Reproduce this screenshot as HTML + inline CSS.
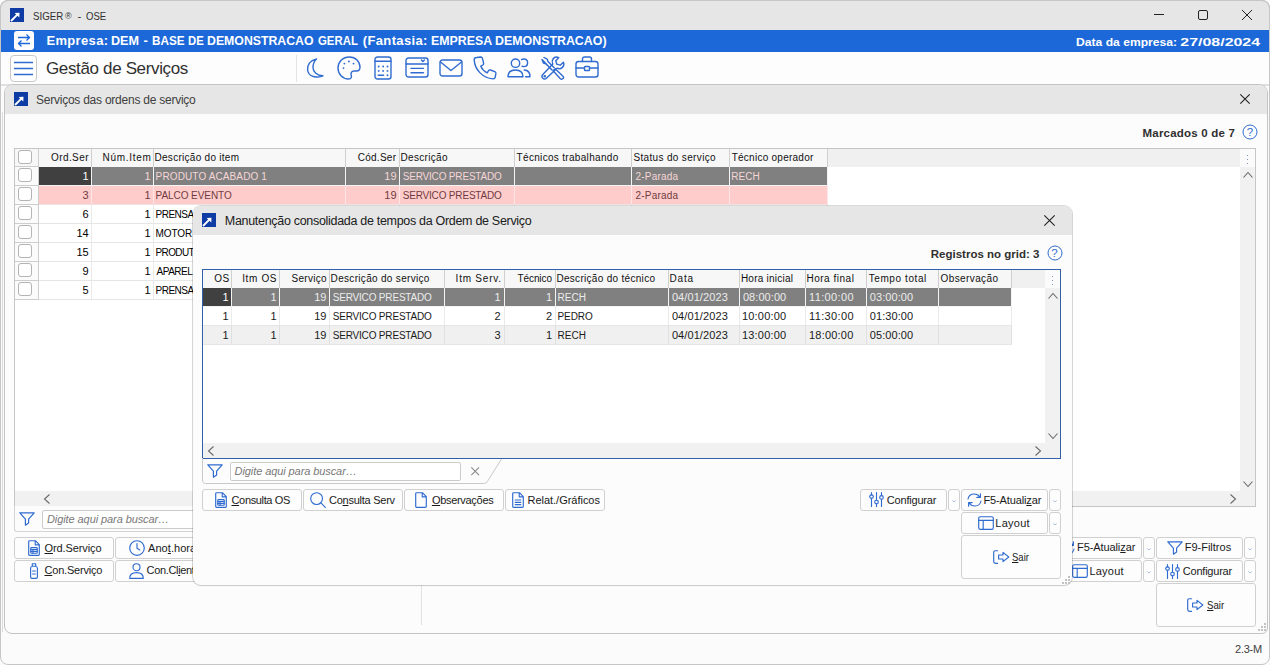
<!DOCTYPE html>
<html lang="pt-BR">
<head>
<meta charset="utf-8">
<title>SIGER - OSE</title>
<style>
html,body{margin:0;padding:0;}
body{width:1270px;height:665px;overflow:hidden;position:relative;background:#e9e9e9;font-family:"Liberation Sans",sans-serif;font-size:11px;color:#000;}
body div{position:absolute;box-sizing:border-box;}
.t{position:absolute;white-space:pre;}
svg{position:absolute;overflow:visible;}
u{text-decoration:underline;text-underline-offset:1px;}
.btn{background:#fdfdfd;border:1px solid #d0d0d0;border-radius:3px;}
.cb{background:#fff;border:1px solid #b4b4b4;border-radius:3px;width:14px;height:14px;}
</style>
</head>
<body>
<div style="left:0px;top:0px;width:1270px;height:665px;background:#fbfbfb;"></div>
<div style="left:0px;top:0px;width:1270px;height:31px;background:#e6e6e6;border:1px solid #c8c8c8;border-radius:8px 8px 0 0;border-bottom:none;"></div>
<svg style="left:10px;top:8px" width="14" height="14" viewBox="0 0 14 14"><rect width="14" height="14" fill="#0e3ba4"/><path d="M1 13 L7.6 6.4" fill="none" stroke="#fff" stroke-width="1.9"/><path d="M4.6 4.9 L9.5 4.7 L9.3 9.6 Z" fill="#fff"/></svg>
<span class="t" style="top:8.5px;font-size:11.5px;line-height:15.5px;color:#303030;left:33.00px;display:inline-block;transform:scaleX(0.8457);transform-origin:0 50%;">SIGER</span>
<span class="t" style="top:9.5px;font-size:9px;line-height:13px;color:#303030;left:65.00px;">®</span>
<span class="t" style="top:8.5px;font-size:11.5px;line-height:15.5px;color:#303030;left:77.40px;">-</span>
<span class="t" style="top:8.5px;font-size:11.5px;line-height:15.5px;color:#303030;left:85.60px;display:inline-block;transform:scaleX(0.8333);transform-origin:0 50%;">OSE</span>
<svg style="left:1153px;top:9px" width="110" height="14" viewBox="0 0 110 14"><path d="M1 5.5 H11" stroke="#222" stroke-width="1" fill="none"/><rect x="45.5" y="1.5" width="9" height="9" rx="1.5" fill="none" stroke="#222" stroke-width="1"/><path d="M89 1 L99 11 M99 1 L89 11" stroke="#222" stroke-width="1" fill="none"/></svg>
<div style="left:1px;top:30px;width:1268px;height:22px;background:#1c68d8;"></div>
<div style="left:14px;top:31px;width:20px;height:19px;background:#fff;border-radius:3px;"></div>
<svg style="left:14px;top:31px" width="20" height="19" viewBox="0 0 20 19"><path d="M4 6.5 H15.5 M12.5 3.5 L15.5 6.5 L12.5 9.5 M16 12.5 H4.5 M7.5 9.5 L4.5 12.5 L7.5 15.5" fill="none" stroke="#1c68d8" stroke-width="1.3"/></svg>
<span class="t" style="top:32.0px;font-size:13px;line-height:17px;color:#fff;font-weight:700;letter-spacing:0.343px;left:46.40px;">Empresa:</span>
<span class="t" style="top:32.0px;font-size:13px;line-height:17px;color:#fff;font-weight:700;left:110.63px;display:inline-block;transform:scaleX(0.9704);transform-origin:0 50%;">DEM</span>
<span class="t" style="top:32.0px;font-size:13px;line-height:17px;color:#fff;font-weight:700;left:143.60px;">-</span>
<span class="t" style="top:32.0px;font-size:13px;line-height:17px;color:#fff;font-weight:700;left:151.50px;display:inline-block;transform:scaleX(0.9029);transform-origin:0 50%;">BASE</span>
<span class="t" style="top:32.0px;font-size:13px;line-height:17px;color:#fff;font-weight:700;left:188.13px;display:inline-block;transform:scaleX(0.8706);transform-origin:0 50%;">DE</span>
<span class="t" style="top:32.0px;font-size:13px;line-height:17px;color:#fff;font-weight:700;left:207.25px;display:inline-block;transform:scaleX(0.9459);transform-origin:0 50%;">DEMONSTRACAO</span>
<span class="t" style="top:32.0px;font-size:13px;line-height:17px;color:#fff;font-weight:700;left:317.70px;display:inline-block;transform:scaleX(0.8756);transform-origin:0 50%;">GERAL</span>
<span class="t" style="top:32.0px;font-size:13px;line-height:17px;color:#fff;font-weight:700;letter-spacing:0.356px;left:362.80px;">(Fantasia:</span>
<span class="t" style="top:32.0px;font-size:13px;line-height:17px;color:#fff;font-weight:700;left:431.05px;display:inline-block;transform:scaleX(0.9524);transform-origin:0 50%;">EMPRESA</span>
<span class="t" style="top:32.0px;font-size:13px;line-height:17px;color:#fff;font-weight:700;left:495.35px;display:inline-block;transform:scaleX(0.9534);transform-origin:0 50%;">DEMONSTRACAO)</span>
<span class="t" style="top:34.5px;font-size:11px;line-height:15px;color:#fff;font-weight:700;left:1076.20px;display:inline-block;transform:scaleX(1.1022);transform-origin:0 50%;">Data da empresa:</span>
<span class="t" style="top:34.5px;font-size:11px;line-height:15px;color:#fff;font-weight:700;right:9.61px;display:inline-block;transform:scaleX(1.4473);transform-origin:100% 50%;">27/08/2024</span>
<div style="left:1px;top:52px;width:1268px;height:32px;background:#fdfdfd;"></div>
<div style="left:1px;top:84px;width:1268px;height:2px;background:#e0e0e0;"></div>
<div style="left:10px;top:55px;width:27px;height:27px;background:#fff;border:1px solid #c8c8c8;border-radius:4px;"></div>
<svg style="left:10px;top:55px" width="27" height="27" viewBox="0 0 27 27"><path d="M4 7.5 H23 M4 13.5 H23 M4 19.5 H23" stroke="#2f6bd0" stroke-width="1.4" fill="none"/></svg>
<span class="t" style="top:57.5px;font-size:17px;line-height:21px;color:#303030;letter-spacing:-0.353px;left:46.00px;">Gestão de Serviços</span>
<div style="left:296px;top:55px;width:1px;height:27px;background:#e4e4e4;"></div>
<svg style="left:306px;top:57.5px" width="18" height="21" viewBox="0 0 18 21" fill="none" stroke="#2f6bd0" stroke-width="1.4" stroke-linecap="round" stroke-linejoin="round"><path d="M10.5 1 C4 2.5 1 7 1.6 12 C2.3 17.5 8 21 17 17.8 C11 17.6 7 13.8 7 9.5 C7 6 8.3 3 10.5 1 Z"/></svg>
<svg style="left:337px;top:56px" width="24" height="24" viewBox="0 0 24 24" fill="none" stroke="#2f6bd0" stroke-width="1.4" stroke-linecap="round" stroke-linejoin="round"><path d="M12.5 1 C5.5 1 1 6 1 12 C1 18 5.5 23 11.5 23 C14.5 23 14.8 21 14.2 19.3 C13.5 17.2 14.5 15 17 15 H19.5 C22 15 23 13.2 23 11 C23 5.5 18.5 1 12.5 1 Z"/><g stroke="none" fill="#2f6bd0"><circle cx="6.5" cy="12.1" r="0.95"/><circle cx="7.4" cy="7.6" r="0.95"/><circle cx="11.9" cy="5.4" r="0.95"/><circle cx="16.5" cy="7.6" r="0.95"/></g></svg>
<svg style="left:374px;top:56px" width="18" height="24" viewBox="0 0 18 24" fill="none" stroke="#2f6bd0" stroke-width="1.4" stroke-linecap="round" stroke-linejoin="round"><rect x="1" y="1" width="16" height="22" rx="2.5"/><path d="M1 5.3 H17"/><g fill="#2f6bd0" stroke="none"><circle cx="4.7" cy="10.5" r="0.95"/><circle cx="9.1" cy="10.5" r="0.95"/><circle cx="13.5" cy="10.5" r="0.95"/><circle cx="4.7" cy="14.9" r="0.95"/><circle cx="9.1" cy="14.9" r="0.95"/><circle cx="13.5" cy="14.9" r="0.95"/><circle cx="13.5" cy="19.3" r="0.95"/></g><path d="M4.2 19.3 H9.6"/></svg>
<svg style="left:405px;top:57px" width="24" height="21" viewBox="0 0 24 21" fill="none" stroke="#2f6bd0" stroke-width="1.4" stroke-linecap="round" stroke-linejoin="round"><rect x="1" y="1" width="22" height="19" rx="2.5"/><path d="M1 7 H23 M6 11.4 H18.4 M6 15.8 H18.4 M16.4 3 L17.9 4.4 L19.4 3"/></svg>
<svg style="left:439px;top:59px" width="24" height="18" viewBox="0 0 24 18" fill="none" stroke="#2f6bd0" stroke-width="1.4" stroke-linecap="round" stroke-linejoin="round"><rect x="1" y="1" width="22" height="16" rx="2.5"/><path d="M1.5 3 L12 11.5 L22.5 3"/></svg>
<svg style="left:473px;top:56px" width="24" height="24" viewBox="0 0 24 24" fill="none" stroke="#2f6bd0" stroke-width="1.4" stroke-linecap="round" stroke-linejoin="round"><path d="M3.5 1.5 L7.8 1 C8.6 1 9.2 1.5 9.4 2.2 L10.6 7.2 C10.8 8 10.4 8.6 9.8 9 L7.8 10.2 C9 13 11.2 15.4 14.2 16.8 L15.6 14.6 C16 14 16.8 13.8 17.4 14 L21.8 15.6 C22.6 15.9 23 16.6 22.9 17.4 L22.2 21.2 C22 22.2 21.2 23 20 22.9 C9.5 22 1.6 13.5 1.2 3.6 C1.2 2.4 2.2 1.6 3.5 1.5 Z"/></svg>
<svg style="left:507px;top:58px" width="24" height="20" viewBox="0 0 24 20" fill="none" stroke="#2f6bd0" stroke-width="1.4" stroke-linecap="round" stroke-linejoin="round"><circle cx="8.5" cy="5.2" r="4.2"/><path d="M1 18.8 C1 14.5 4 12 8.5 12 C13 12 16 14.5 16 18.8 Z"/><path d="M14.5 1.6 C15.2 1.2 16 1 16.8 1 C19 1 20.6 2.6 20.6 4.8 C20.6 7 19 8.6 16.8 8.6 C16.2 8.6 15.6 8.5 15.1 8.2"/><path d="M17.2 12 C20.8 12.2 23 14.6 23 18.8 H18.6"/></svg>
<svg style="left:541px;top:56px" width="24" height="24" viewBox="0 0 24 24" fill="none" stroke="#2f6bd0" stroke-width="1.4" stroke-linecap="round" stroke-linejoin="round"><path d="M3 1.5 L6.2 3.2 L7 5.6 L13.2 11.8 M11 14 L4.8 7.8 L2.4 7 L1 3.6 Z" /><path d="M14.2 12.8 L22.2 20.4 C22.8 21 22.8 21.8 22.2 22.4 L21.4 23 C20.8 23.4 20 23.4 19.4 22.8 L12 14.8 Z"/><path d="M17.8 1.6 C15.6 0.6 13.2 1.2 12 3 C11 4.5 11 6.4 11.8 8 L1.8 18.6 C0.8 19.6 0.8 21.2 1.8 22.2 C2.8 23.2 4.4 23.2 5.4 22.2 L16 12.2 C17.8 13 19.8 12.8 21.2 11.6 C22.8 10.2 23.2 8 22.4 6.2 L19.2 9.2 L15.8 8.2 L14.8 4.8 Z"/><circle cx="3.8" cy="20.2" r="0.6"/></svg>
<svg style="left:575px;top:56px" width="24" height="22" viewBox="0 0 24 22" fill="none" stroke="#2f6bd0" stroke-width="1.4" stroke-linecap="round" stroke-linejoin="round"><rect x="1" y="5.5" width="22" height="15.5" rx="2.5"/><path d="M7.5 5.5 V3 C7.5 1.8 8.3 1 9.5 1 H14.5 C15.7 1 16.5 1.8 16.5 3 V5.5 M1 12 H9.5 M14.5 12 H23"/><rect x="9.5" y="10.5" width="5" height="4" rx="0.8"/></svg>
<div style="left:1px;top:86px;width:1268px;height:548px;background:#fbfbfb;"></div>
<div style="left:2px;top:112px;width:1px;height:520px;background:#dcdcdc;"></div>
<div style="left:4px;top:84px;width:1264px;height:550px;background:#fcfcfc;border:1px solid #c4c4c4;border-radius:9px 9px 6px 8px;"></div>
<div style="left:5px;top:85px;width:1262px;height:29px;background:#e6e6e6;border-radius:8px 8px 0 0;"></div>
<svg style="left:14px;top:92px" width="14" height="14" viewBox="0 0 14 14"><rect width="14" height="14" fill="#0e3ba4"/><path d="M1 13 L7.6 6.4" fill="none" stroke="#fff" stroke-width="1.9"/><path d="M4.6 4.9 L9.5 4.7 L9.3 9.6 Z" fill="#fff"/></svg>
<span class="t" style="top:92.0px;font-size:12px;line-height:16px;color:#404040;letter-spacing:-0.241px;left:36.00px;">Serviços das ordens de serviço</span>
<svg style="left:1240px;top:94px" width="10" height="10" viewBox="0 0 10 10"><path d="M0.3 0.3 L9.7 9.7 M9.7 0.3 L0.3 9.7" stroke="#222" stroke-width="1.1" fill="none"/></svg>
<span class="t" style="top:125.5px;font-size:11.5px;line-height:15.5px;color:#303030;font-weight:700;letter-spacing:0.214px;right:34.80px;">Marcados 0 de 7</span>
<svg style="left:1242px;top:124px" width="16" height="16" viewBox="0 0 16 16"><circle cx="8" cy="8" r="7" fill="#fff" stroke="#2f6bd0" stroke-width="1"/></svg>
<span class="t" style="top:124.5px;font-size:11.5px;line-height:15.5px;color:#2f6bd0;left:1246.80px;">?</span>
<span class="t" style="top:642.0px;font-size:11px;line-height:15px;color:#404040;letter-spacing:-0.250px;right:8.12px;">2.3-M</span>
<div style="left:0;top:0;width:1270px;height:665px;border:1px solid #c6c6c6;border-radius:8px 8px 8px 8px;pointer-events:none"></div>
<div style="left:14px;top:148px;width:1242px;height:359px;background:#fff;border:1px solid #c6c6c6;"></div>
<div style="left:15px;top:149px;width:1225px;height:18px;background:#f0f0f0;"></div>
<div style="left:1240px;top:167px;width:15px;height:339px;background:#f1f1f1;"></div>
<div style="left:15px;top:491px;width:1225px;height:15px;background:#f1f1f1;"></div>
<div style="left:1240px;top:149px;width:15px;height:18px;background:#fbfbfb;"></div>
<div style="left:1247px;top:155px;width:1.4px;height:1.4px;background:#7e96c4;"></div>
<div style="left:1247px;top:159px;width:1.4px;height:1.4px;background:#7e96c4;"></div>
<div style="left:1247px;top:163px;width:1.4px;height:1.4px;background:#7e96c4;"></div>
<svg style="left:1247.5px;top:175px" width="1" height="1"><path d="M-4.5 2.5 L0 -2.5 L4.5 2.5" fill="none" stroke="#6a6a6a" stroke-width="1.1"/></svg>
<svg style="left:1247.5px;top:483.5px" width="1" height="1"><path d="M-4.5 -2.5 L0 2.5 L4.5 -2.5" fill="none" stroke="#6a6a6a" stroke-width="1.1"/></svg>
<svg style="left:46.5px;top:498.5px" width="1" height="1"><path d="M2.5 -4.5 L-2.5 0 L2.5 4.5" fill="none" stroke="#6a6a6a" stroke-width="1.1"/></svg>
<svg style="left:1232.5px;top:498.5px" width="1" height="1"><path d="M-2.5 -4.5 L2.5 0 L-2.5 4.5" fill="none" stroke="#6a6a6a" stroke-width="1.1"/></svg>
<div style="left:15px;top:149px;width:23px;height:18px;background:#f7f7f7;"></div>
<div style="left:38px;top:149px;width:1px;height:18px;background:#cfcfcf;"></div>
<div style="left:39px;top:149px;width:52px;height:18px;background:#f7f7f7;"></div>
<div style="left:91px;top:149px;width:1px;height:18px;background:#cfcfcf;"></div>
<span class="t" style="top:150.5px;font-size:10px;line-height:14px;color:#111;letter-spacing:0.417px;right:1181.07px;">Ord.Ser</span>
<div style="left:92px;top:149px;width:61px;height:18px;background:#f7f7f7;"></div>
<div style="left:153px;top:149px;width:1px;height:18px;background:#cfcfcf;"></div>
<span class="t" style="top:150.5px;font-size:10px;line-height:14px;color:#111;letter-spacing:0.714px;right:1118.44px;">Núm.Item</span>
<div style="left:154px;top:149px;width:191px;height:18px;background:#f7f7f7;"></div>
<div style="left:345px;top:149px;width:1px;height:18px;background:#cfcfcf;"></div>
<span class="t" style="top:150.5px;font-size:10px;line-height:14px;color:#111;letter-spacing:0.281px;left:154.50px;">Descrição do item</span>
<div style="left:346px;top:149px;width:53px;height:18px;background:#f7f7f7;"></div>
<div style="left:399px;top:149px;width:1px;height:18px;background:#cfcfcf;"></div>
<span class="t" style="top:150.5px;font-size:10px;line-height:14px;color:#111;letter-spacing:0.267px;right:873.75px;">Cód.Ser</span>
<div style="left:400px;top:149px;width:114px;height:18px;background:#f7f7f7;"></div>
<div style="left:514px;top:149px;width:1px;height:18px;background:#cfcfcf;"></div>
<span class="t" style="top:150.5px;font-size:10px;line-height:14px;color:#111;letter-spacing:0.300px;left:400.60px;">Descrição</span>
<div style="left:515px;top:149px;width:116px;height:18px;background:#f7f7f7;"></div>
<div style="left:631px;top:149px;width:1px;height:18px;background:#cfcfcf;"></div>
<span class="t" style="top:150.5px;font-size:10px;line-height:14px;color:#111;letter-spacing:0.316px;left:516.60px;">Técnicos trabalhando</span>
<div style="left:632px;top:149px;width:97px;height:18px;background:#f7f7f7;"></div>
<div style="left:729px;top:149px;width:1px;height:18px;background:#cfcfcf;"></div>
<span class="t" style="top:150.5px;font-size:10px;line-height:14px;color:#111;letter-spacing:0.344px;left:633.40px;">Status do serviço</span>
<div style="left:730px;top:149px;width:97px;height:18px;background:#f7f7f7;"></div>
<div style="left:827px;top:149px;width:1px;height:18px;background:#cfcfcf;"></div>
<span class="t" style="top:150.5px;font-size:10px;line-height:14px;color:#111;letter-spacing:0.253px;left:731.70px;">Técnico operador</span>
<div style="left:15px;top:167px;width:23px;height:18px;background:#fbfbfb;"></div>
<div style="left:15px;top:185px;width:23px;height:1px;background:#cdcdcd;"></div>
<div style="left:38px;top:167px;width:1px;height:19px;background:#cdcdcd;"></div>
<div style="left:39px;top:167px;width:52px;height:18px;background:#404040;"></div>
<div style="left:91px;top:167px;width:1px;height:19px;background:#f4f4f4;"></div>
<div style="left:92px;top:167px;width:61px;height:18px;background:#808080;"></div>
<div style="left:153px;top:167px;width:1px;height:19px;background:#f4f4f4;"></div>
<div style="left:154px;top:167px;width:191px;height:18px;background:#808080;"></div>
<div style="left:345px;top:167px;width:1px;height:19px;background:#f4f4f4;"></div>
<div style="left:346px;top:167px;width:53px;height:18px;background:#808080;"></div>
<div style="left:399px;top:167px;width:1px;height:19px;background:#f4f4f4;"></div>
<div style="left:400px;top:167px;width:114px;height:18px;background:#808080;"></div>
<div style="left:514px;top:167px;width:1px;height:19px;background:#f4f4f4;"></div>
<div style="left:515px;top:167px;width:116px;height:18px;background:#808080;"></div>
<div style="left:631px;top:167px;width:1px;height:19px;background:#f4f4f4;"></div>
<div style="left:632px;top:167px;width:97px;height:18px;background:#808080;"></div>
<div style="left:729px;top:167px;width:1px;height:19px;background:#f4f4f4;"></div>
<div style="left:730px;top:167px;width:97px;height:18px;background:#808080;"></div>
<div style="left:827px;top:167px;width:1px;height:19px;background:#f4f4f4;"></div>
<div style="left:39px;top:185px;width:789px;height:1px;background:#f4f4f4;"></div>
<span class="t" style="top:168.5px;font-size:11px;line-height:15px;color:#fff;right:1181.38px;">1</span>
<span class="t" style="top:168.5px;font-size:11px;line-height:15px;color:#f6d6d6;right:1119.38px;">1</span>
<span class="t" style="top:169.5px;font-size:10px;line-height:14px;color:#f6d6d6;letter-spacing:0.125px;left:155.60px;">PRODUTO ACABADO 1</span>
<span class="t" style="top:168.5px;font-size:11px;line-height:15px;color:#f6d6d6;right:873.45px;">19</span>
<span class="t" style="top:169.5px;font-size:10px;line-height:14px;color:#f6d6d6;letter-spacing:-0.180px;left:402.70px;">SERVICO PRESTADO</span>
<span class="t" style="top:169.5px;font-size:10px;line-height:14px;color:#f6d6d6;letter-spacing:0.229px;left:635.40px;">2-Parada</span>
<span class="t" style="top:169.5px;font-size:10px;line-height:14px;color:#f6d6d6;letter-spacing:0.067px;left:731.30px;">RECH</span>
<div style="left:15px;top:186px;width:23px;height:18px;background:#fbfbfb;"></div>
<div style="left:15px;top:204px;width:23px;height:1px;background:#cdcdcd;"></div>
<div style="left:38px;top:186px;width:1px;height:19px;background:#cdcdcd;"></div>
<div style="left:39px;top:186px;width:52px;height:18px;background:#ffcccc;"></div>
<div style="left:91px;top:186px;width:1px;height:19px;background:#ffe6e6;"></div>
<div style="left:92px;top:186px;width:61px;height:18px;background:#ffcccc;"></div>
<div style="left:153px;top:186px;width:1px;height:19px;background:#ffe6e6;"></div>
<div style="left:154px;top:186px;width:191px;height:18px;background:#ffcccc;"></div>
<div style="left:345px;top:186px;width:1px;height:19px;background:#ffe6e6;"></div>
<div style="left:346px;top:186px;width:53px;height:18px;background:#ffcccc;"></div>
<div style="left:399px;top:186px;width:1px;height:19px;background:#ffe6e6;"></div>
<div style="left:400px;top:186px;width:114px;height:18px;background:#ffcccc;"></div>
<div style="left:514px;top:186px;width:1px;height:19px;background:#ffe6e6;"></div>
<div style="left:515px;top:186px;width:116px;height:18px;background:#ffcccc;"></div>
<div style="left:631px;top:186px;width:1px;height:19px;background:#ffe6e6;"></div>
<div style="left:632px;top:186px;width:97px;height:18px;background:#ffcccc;"></div>
<div style="left:729px;top:186px;width:1px;height:19px;background:#ffe6e6;"></div>
<div style="left:730px;top:186px;width:97px;height:18px;background:#ffcccc;"></div>
<div style="left:827px;top:186px;width:1px;height:19px;background:#ffe6e6;"></div>
<div style="left:39px;top:204px;width:789px;height:1px;background:#f0e0e0;"></div>
<span class="t" style="top:187.5px;font-size:11px;line-height:15px;color:#6e3c40;right:1181.38px;">3</span>
<span class="t" style="top:187.5px;font-size:11px;line-height:15px;color:#6e3c40;right:1119.38px;">1</span>
<span class="t" style="top:188.5px;font-size:10px;line-height:14px;color:#6e3c40;letter-spacing:-0.073px;left:155.60px;">PALCO EVENTO</span>
<span class="t" style="top:187.5px;font-size:11px;line-height:15px;color:#6e3c40;right:873.45px;">19</span>
<span class="t" style="top:188.5px;font-size:10px;line-height:14px;color:#6e3c40;letter-spacing:-0.180px;left:402.70px;">SERVICO PRESTADO</span>
<span class="t" style="top:188.5px;font-size:10px;line-height:14px;color:#6e3c40;letter-spacing:0.229px;left:635.40px;">2-Parada</span>
<div style="left:15px;top:205px;width:23px;height:18px;background:#fbfbfb;"></div>
<div style="left:15px;top:223px;width:23px;height:1px;background:#cdcdcd;"></div>
<div style="left:38px;top:205px;width:1px;height:19px;background:#cdcdcd;"></div>
<div style="left:91px;top:205px;width:1px;height:19px;background:#eaeaea;"></div>
<div style="left:153px;top:205px;width:1px;height:19px;background:#eaeaea;"></div>
<div style="left:345px;top:205px;width:1px;height:19px;background:#eaeaea;"></div>
<div style="left:399px;top:205px;width:1px;height:19px;background:#eaeaea;"></div>
<div style="left:514px;top:205px;width:1px;height:19px;background:#eaeaea;"></div>
<div style="left:631px;top:205px;width:1px;height:19px;background:#eaeaea;"></div>
<div style="left:729px;top:205px;width:1px;height:19px;background:#eaeaea;"></div>
<div style="left:827px;top:205px;width:1px;height:19px;background:#eaeaea;"></div>
<div style="left:39px;top:223px;width:789px;height:1px;background:#e6e6e6;"></div>
<span class="t" style="top:206.5px;font-size:11px;line-height:15px;color:#000;right:1181.38px;">6</span>
<span class="t" style="top:206.5px;font-size:11px;line-height:15px;color:#000;right:1119.38px;">1</span>
<span class="t" style="top:207.5px;font-size:10px;line-height:14px;color:#000;letter-spacing:-0.520px;left:155.60px;">PRENSA</span>
<div style="left:15px;top:224px;width:23px;height:18px;background:#fbfbfb;"></div>
<div style="left:15px;top:242px;width:23px;height:1px;background:#cdcdcd;"></div>
<div style="left:38px;top:224px;width:1px;height:19px;background:#cdcdcd;"></div>
<div style="left:91px;top:224px;width:1px;height:19px;background:#eaeaea;"></div>
<div style="left:153px;top:224px;width:1px;height:19px;background:#eaeaea;"></div>
<div style="left:345px;top:224px;width:1px;height:19px;background:#eaeaea;"></div>
<div style="left:399px;top:224px;width:1px;height:19px;background:#eaeaea;"></div>
<div style="left:514px;top:224px;width:1px;height:19px;background:#eaeaea;"></div>
<div style="left:631px;top:224px;width:1px;height:19px;background:#eaeaea;"></div>
<div style="left:729px;top:224px;width:1px;height:19px;background:#eaeaea;"></div>
<div style="left:827px;top:224px;width:1px;height:19px;background:#eaeaea;"></div>
<div style="left:39px;top:242px;width:789px;height:1px;background:#e6e6e6;"></div>
<span class="t" style="top:225.5px;font-size:11px;line-height:15px;color:#000;right:1181.25px;">14</span>
<span class="t" style="top:225.5px;font-size:11px;line-height:15px;color:#000;right:1119.38px;">1</span>
<span class="t" style="top:226.5px;font-size:10px;line-height:14px;color:#000;letter-spacing:-0.125px;left:155.60px;">MOTOR</span>
<div style="left:15px;top:243px;width:23px;height:18px;background:#fbfbfb;"></div>
<div style="left:15px;top:261px;width:23px;height:1px;background:#cdcdcd;"></div>
<div style="left:38px;top:243px;width:1px;height:19px;background:#cdcdcd;"></div>
<div style="left:91px;top:243px;width:1px;height:19px;background:#eaeaea;"></div>
<div style="left:153px;top:243px;width:1px;height:19px;background:#eaeaea;"></div>
<div style="left:345px;top:243px;width:1px;height:19px;background:#eaeaea;"></div>
<div style="left:399px;top:243px;width:1px;height:19px;background:#eaeaea;"></div>
<div style="left:514px;top:243px;width:1px;height:19px;background:#eaeaea;"></div>
<div style="left:631px;top:243px;width:1px;height:19px;background:#eaeaea;"></div>
<div style="left:729px;top:243px;width:1px;height:19px;background:#eaeaea;"></div>
<div style="left:827px;top:243px;width:1px;height:19px;background:#eaeaea;"></div>
<div style="left:39px;top:261px;width:789px;height:1px;background:#e6e6e6;"></div>
<span class="t" style="top:244.5px;font-size:11px;line-height:15px;color:#000;right:1181.25px;">15</span>
<span class="t" style="top:244.5px;font-size:11px;line-height:15px;color:#000;right:1119.38px;">1</span>
<span class="t" style="top:245.5px;font-size:10px;line-height:14px;color:#000;letter-spacing:-0.640px;left:155.60px;">PRODUT</span>
<div style="left:15px;top:262px;width:23px;height:18px;background:#fbfbfb;"></div>
<div style="left:15px;top:280px;width:23px;height:1px;background:#cdcdcd;"></div>
<div style="left:38px;top:262px;width:1px;height:19px;background:#cdcdcd;"></div>
<div style="left:91px;top:262px;width:1px;height:19px;background:#eaeaea;"></div>
<div style="left:153px;top:262px;width:1px;height:19px;background:#eaeaea;"></div>
<div style="left:345px;top:262px;width:1px;height:19px;background:#eaeaea;"></div>
<div style="left:399px;top:262px;width:1px;height:19px;background:#eaeaea;"></div>
<div style="left:514px;top:262px;width:1px;height:19px;background:#eaeaea;"></div>
<div style="left:631px;top:262px;width:1px;height:19px;background:#eaeaea;"></div>
<div style="left:729px;top:262px;width:1px;height:19px;background:#eaeaea;"></div>
<div style="left:827px;top:262px;width:1px;height:19px;background:#eaeaea;"></div>
<div style="left:39px;top:280px;width:789px;height:1px;background:#e6e6e6;"></div>
<span class="t" style="top:263.5px;font-size:11px;line-height:15px;color:#000;right:1181.38px;">9</span>
<span class="t" style="top:263.5px;font-size:11px;line-height:15px;color:#000;right:1119.38px;">1</span>
<span class="t" style="top:264.5px;font-size:10px;line-height:14px;color:#000;letter-spacing:-0.500px;left:156.60px;">APAREL</span>
<div style="left:15px;top:281px;width:23px;height:18px;background:#fbfbfb;"></div>
<div style="left:15px;top:299px;width:23px;height:1px;background:#cdcdcd;"></div>
<div style="left:38px;top:281px;width:1px;height:19px;background:#cdcdcd;"></div>
<div style="left:91px;top:281px;width:1px;height:19px;background:#eaeaea;"></div>
<div style="left:153px;top:281px;width:1px;height:19px;background:#eaeaea;"></div>
<div style="left:345px;top:281px;width:1px;height:19px;background:#eaeaea;"></div>
<div style="left:399px;top:281px;width:1px;height:19px;background:#eaeaea;"></div>
<div style="left:514px;top:281px;width:1px;height:19px;background:#eaeaea;"></div>
<div style="left:631px;top:281px;width:1px;height:19px;background:#eaeaea;"></div>
<div style="left:729px;top:281px;width:1px;height:19px;background:#eaeaea;"></div>
<div style="left:827px;top:281px;width:1px;height:19px;background:#eaeaea;"></div>
<div style="left:39px;top:299px;width:789px;height:1px;background:#e6e6e6;"></div>
<span class="t" style="top:282.5px;font-size:11px;line-height:15px;color:#000;right:1181.38px;">5</span>
<span class="t" style="top:282.5px;font-size:11px;line-height:15px;color:#000;right:1119.38px;">1</span>
<span class="t" style="top:283.5px;font-size:10px;line-height:14px;color:#000;letter-spacing:-0.520px;left:155.60px;">PRENSA</span>
<div class="cb" style="left:18px;top:150px"></div>
<div style="left:15px;top:166px;width:23px;height:1px;background:#cdcdcd;"></div>
<div class="cb" style="left:18px;top:168px"></div>
<div class="cb" style="left:18px;top:187px"></div>
<div class="cb" style="left:18px;top:206px"></div>
<div class="cb" style="left:18px;top:225px"></div>
<div class="cb" style="left:18px;top:244px"></div>
<div class="cb" style="left:18px;top:263px"></div>
<div class="cb" style="left:18px;top:282px"></div>
<div style="left:14px;top:506px;width:600px;height:26px;background:#fcfcfc;border:1px solid #d4d4d4;border-radius:0 0 0 3px;border-top:none;border-right:none;"></div>
<svg style="left:19px;top:512px" width="16" height="14" viewBox="0 0 16 14" fill="none" stroke="#2f6bd0" stroke-width="1.2" stroke-linecap="round" stroke-linejoin="round"><path d="M0.8 0.8 H15.2 L9.6 7.2 V11 L6.4 13.2 V7.2 Z"/></svg>
<div style="left:42px;top:510px;width:420px;height:19px;background:#fff;border:1px solid #cbcbcb;border-radius:2px;"></div>
<span class="t" style="top:511.5px;font-size:11px;line-height:15px;color:#787878;font-style:italic;letter-spacing:-0.087px;left:47.00px;">Digite aqui para buscar…</span>
<div class="btn" style="left:14px;top:537px;width:100px;height:22px"></div>
<svg style="left:28px;top:540px" width="12" height="16" viewBox="0 0 12 16" fill="none" stroke="#2f6bd0" stroke-width="1.15" stroke-linecap="round" stroke-linejoin="round"><path d="M1.6 0.7 H7.4 L11.3 4.6 V14.4 C11.3 15 11 15.3 10.4 15.3 H1.6 C1 15.3 0.7 15 0.7 14.4 V1.6 C0.7 1 1 0.7 1.6 0.7 Z M7.2 0.9 V4.8 H11.1"/><rect x="2.8" y="7.6" width="6.4" height="5.6" rx="0.6"/><path d="M2.8 9.5 H9.2 M2.8 11.4 H9.2 M5 9.5 V13.2"/></svg>
<span class="t" style="top:540.5px;font-size:11px;line-height:15px;color:#1a1a1a;letter-spacing:-0.100px;left:44.50px;"><u>O</u>rd.Serviço</span>
<div class="btn" style="left:115px;top:537px;width:100px;height:22px"></div>
<svg style="left:129px;top:540px" width="16" height="16" viewBox="0 0 16 16" fill="none" stroke="#2f6bd0" stroke-width="1.15" stroke-linecap="round" stroke-linejoin="round"><circle cx="8" cy="8" r="7.3"/><path d="M8 3.6 V8.2 L10.8 10"/></svg>
<span class="t" style="top:540.5px;font-size:11px;line-height:15px;color:#1a1a1a;letter-spacing:0.062px;left:148.00px;">Ano<u>t</u>.hora</span>
<div class="btn" style="left:14px;top:560px;width:100px;height:22px"></div>
<svg style="left:30px;top:563px" width="8" height="16" viewBox="0 0 8 16" fill="none" stroke="#2f6bd0" stroke-width="1.15" stroke-linecap="round" stroke-linejoin="round"><path d="M2.3 0.7 H5.7 V3.2 C6.8 3.5 7.4 4.2 7.4 5.2 V14 C7.4 14.8 6.9 15.3 6.1 15.3 H1.9 C1.1 15.3 0.6 14.8 0.6 14 V5.2 C0.6 4.2 1.2 3.5 2.3 3.2 Z M2.3 3.2 H5.7 M2.6 8 H5.4 M2.6 11 H5.4"/></svg>
<span class="t" style="top:563.0px;font-size:11px;line-height:15px;color:#1a1a1a;letter-spacing:-0.200px;left:44.50px;"><u>C</u>on.Serviço</span>
<div class="btn" style="left:115px;top:560px;width:100px;height:22px"></div>
<svg style="left:129px;top:563px" width="15" height="16" viewBox="0 0 15 16" fill="none" stroke="#2f6bd0" stroke-width="1.15" stroke-linecap="round" stroke-linejoin="round"><circle cx="7.5" cy="4.2" r="3.5"/><path d="M0.7 15.3 C0.7 11.6 3.4 9.6 7.5 9.6 C11.6 9.6 14.3 11.6 14.3 15.3 Z"/></svg>
<span class="t" style="top:563.0px;font-size:11px;line-height:15px;color:#1a1a1a;letter-spacing:-0.350px;left:146.60px;">Con.Cl<u>i</u>ente</span>
<div class="btn" style="left:1055px;top:537px;width:87px;height:22px"></div>
<svg style="left:1060px;top:541px" width="15" height="14" viewBox="0 0 15 14" fill="none" stroke="#2f6bd0" stroke-width="1.15" stroke-linecap="round" stroke-linejoin="round"><path d="M1 6 C1.6 3 4 1 7.2 1 C9.6 1 11.6 2.2 12.8 4 M13.4 0.8 V4.4 H9.8 M14 8 C13.4 11 11 13 7.8 13 C5.4 13 3.4 11.8 2.2 10 M1.6 13.2 V9.6 H5.2"/></svg>
<span class="t" style="top:540.0px;font-size:11px;line-height:15px;color:#1a1a1a;letter-spacing:-0.091px;left:1077.00px;">F5-Atuali<u>z</u>ar</span>
<div class="btn" style="left:1143px;top:537px;width:12px;height:22px"></div>
<svg style="left:1147.0px;top:547.5px" width="4" height="3" viewBox="0 0 4 3"><path d="M0.3 0.5 L2 2 L3.7 0.5" fill="none" stroke="#a4b8de" stroke-width="0.9"/></svg>
<div class="btn" style="left:1156px;top:537px;width:87px;height:22px"></div>
<svg style="left:1166.8px;top:541.3px" width="16" height="14" viewBox="0 0 16 14" fill="none" stroke="#2f6bd0" stroke-width="1.15" stroke-linecap="round" stroke-linejoin="round"><path d="M0.8 0.8 H15.2 L9.6 7.2 V11 L6.4 13.2 V7.2 Z"/></svg>
<span class="t" style="top:540.0px;font-size:11px;line-height:15px;color:#1a1a1a;left:1184.70px;">F9-Filtros</span>
<div class="btn" style="left:1244px;top:537px;width:12px;height:22px"></div>
<svg style="left:1248.0px;top:547.5px" width="4" height="3" viewBox="0 0 4 3"><path d="M0.3 0.5 L2 2 L3.7 0.5" fill="none" stroke="#a4b8de" stroke-width="0.9"/></svg>
<div class="btn" style="left:1055px;top:560px;width:87px;height:22px"></div>
<svg style="left:1072px;top:564.3px" width="16" height="14" viewBox="0 0 16 14" fill="none" stroke="#2f6bd0" stroke-width="1.15" stroke-linecap="round" stroke-linejoin="round"><rect x="0.7" y="0.7" width="14.6" height="12.6" rx="1.6"/><path d="M0.7 4.4 H15.3 M5.2 4.4 V13.3"/></svg>
<span class="t" style="top:563.5px;font-size:11px;line-height:15px;color:#1a1a1a;letter-spacing:0.240px;left:1089.40px;">Layout</span>
<div class="btn" style="left:1143px;top:560px;width:12px;height:22px"></div>
<svg style="left:1147.0px;top:570.5px" width="4" height="3" viewBox="0 0 4 3"><path d="M0.3 0.5 L2 2 L3.7 0.5" fill="none" stroke="#a4b8de" stroke-width="0.9"/></svg>
<div class="btn" style="left:1156px;top:560px;width:87px;height:22px"></div>
<svg style="left:1164.5px;top:563.7px" width="15" height="15" viewBox="0 0 15 15" fill="none" stroke="#2f6bd0" stroke-width="1.15" stroke-linecap="round" stroke-linejoin="round"><path d="M2.5 0.6 V2.8 M2.5 6.4 V14.4 M7.5 0.6 V8.2 M7.5 11.8 V14.4 M12.5 0.6 V3.6 M12.5 7.2 V14.4"/><circle cx="2.5" cy="4.6" r="1.8"/><circle cx="7.5" cy="10" r="1.8"/><circle cx="12.5" cy="5.4" r="1.8"/></svg>
<span class="t" style="top:563.5px;font-size:11px;line-height:15px;color:#1a1a1a;letter-spacing:-0.222px;left:1182.80px;">Configurar</span>
<div class="btn" style="left:1244px;top:560px;width:12px;height:22px"></div>
<svg style="left:1248.0px;top:570.5px" width="4" height="3" viewBox="0 0 4 3"><path d="M0.3 0.5 L2 2 L3.7 0.5" fill="none" stroke="#a4b8de" stroke-width="0.9"/></svg>
<div class="btn" style="left:1156px;top:583px;width:100px;height:44px"></div>
<svg style="left:1187.3px;top:598px" width="17" height="14" viewBox="0 0 17 14" fill="none" stroke="#2f6bd0" stroke-width="1.15" stroke-linecap="round" stroke-linejoin="round"><path d="M4.6 0.7 H2.4 C1.3 0.7 0.7 1.3 0.7 2.4 V11.6 C0.7 12.7 1.3 13.3 2.4 13.3 H4.6"/><path d="M5.6 5 H10 V2.4 L15.8 7 L10 11.6 V9 H5.6 Z"/></svg>
<span class="t" style="top:598.0px;font-size:11px;line-height:15px;color:#1a1a1a;left:1206.60px;display:inline-block;transform:scaleX(0.8750);transform-origin:0 50%;"><u>S</u>air</span>
<div style="left:421px;top:585px;width:1px;height:40px;background:#e2e2e2;"></div>
<div style="left:1264px;top:623px;width:2px;height:2px;background:#c2c2c2;"></div>
<div style="left:1261px;top:626px;width:2px;height:2px;background:#c2c2c2;"></div>
<div style="left:1264px;top:626px;width:2px;height:2px;background:#c2c2c2;"></div>
<div style="left:1258px;top:629px;width:2px;height:2px;background:#c2c2c2;"></div>
<div style="left:1261px;top:629px;width:2px;height:2px;background:#c2c2c2;"></div>
<div style="left:1264px;top:629px;width:2px;height:2px;background:#c2c2c2;"></div>
<div style="left:193px;top:206px;width:879px;height:379px;border-radius:8px;box-shadow:0 1px 2px rgba(0,0,0,0.07),0 0 0 1px rgba(0,0,0,0.15);background:#fcfcfc;"></div>
<div style="left:193px;top:206px;width:879px;height:29px;background:#e6e6e6;border-radius:8px 8px 0 0;"></div>
<svg style="left:202px;top:213px" width="14" height="14" viewBox="0 0 14 14"><rect width="14" height="14" fill="#0e3ba4"/><path d="M1 13 L7.6 6.4" fill="none" stroke="#fff" stroke-width="1.9"/><path d="M4.6 4.9 L9.5 4.7 L9.3 9.6 Z" fill="#fff"/></svg>
<span class="t" style="top:213.0px;font-size:12.5px;line-height:16.5px;color:#202020;letter-spacing:-0.304px;left:224.80px;">Manutenção consolidada de tempos da Ordem de Serviço</span>
<svg style="left:1044px;top:215px" width="11" height="11" viewBox="0 0 11 11"><path d="M0.3 0.3 L10.7 10.7 M10.7 0.3 L0.3 10.7" stroke="#222" stroke-width="1.1" fill="none"/></svg>
<span class="t" style="top:246.5px;font-size:11.5px;line-height:15.5px;color:#303030;font-weight:700;right:230.58px;">Registros no grid: 3</span>
<svg style="left:1046.5px;top:245px" width="16" height="16" viewBox="0 0 16 16"><circle cx="8" cy="8" r="7" fill="#fff" stroke="#2f6bd0" stroke-width="1"/></svg>
<span class="t" style="top:245.5px;font-size:11.5px;line-height:15.5px;color:#2f6bd0;left:1051.30px;">?</span>
<div style="left:202px;top:269px;width:859px;height:190px;background:#fff;border:1px solid #325fa6;"></div>
<div style="left:203px;top:270px;width:842px;height:18px;background:#f0f0f0;"></div>
<div style="left:1045px;top:288px;width:15px;height:170px;background:#f1f1f1;"></div>
<div style="left:203px;top:443px;width:842px;height:15px;background:#f1f1f1;"></div>
<div style="left:1045px;top:270px;width:15px;height:18px;background:#fbfbfb;"></div>
<div style="left:1052px;top:276px;width:1.4px;height:1.4px;background:#7e96c4;"></div>
<div style="left:1052px;top:280px;width:1.4px;height:1.4px;background:#7e96c4;"></div>
<div style="left:1052px;top:284px;width:1.4px;height:1.4px;background:#7e96c4;"></div>
<svg style="left:1052.5px;top:296px" width="1" height="1"><path d="M-4.5 2.5 L0 -2.5 L4.5 2.5" fill="none" stroke="#6a6a6a" stroke-width="1.1"/></svg>
<svg style="left:1052.5px;top:435.5px" width="1" height="1"><path d="M-4.5 -2.5 L0 2.5 L4.5 -2.5" fill="none" stroke="#6a6a6a" stroke-width="1.1"/></svg>
<svg style="left:210.5px;top:450.5px" width="1" height="1"><path d="M2.5 -4.5 L-2.5 0 L2.5 4.5" fill="none" stroke="#6a6a6a" stroke-width="1.1"/></svg>
<svg style="left:1037.5px;top:450.5px" width="1" height="1"><path d="M-2.5 -4.5 L2.5 0 L-2.5 4.5" fill="none" stroke="#6a6a6a" stroke-width="1.1"/></svg>
<div style="left:203px;top:270px;width:28px;height:18px;background:#f7f7f7;"></div>
<div style="left:231px;top:270px;width:1px;height:18px;background:#cfcfcf;"></div>
<span class="t" style="top:271.5px;font-size:10px;line-height:14px;color:#111;letter-spacing:0.300px;right:1040.65px;">OS</span>
<div style="left:232px;top:270px;width:47px;height:18px;background:#f7f7f7;"></div>
<div style="left:279px;top:270px;width:1px;height:18px;background:#cfcfcf;"></div>
<span class="t" style="top:271.5px;font-size:10px;line-height:14px;color:#111;letter-spacing:0.640px;right:992.84px;">Itm OS</span>
<div style="left:280px;top:270px;width:49px;height:18px;background:#f7f7f7;"></div>
<div style="left:329px;top:270px;width:1px;height:18px;background:#cfcfcf;"></div>
<span class="t" style="top:271.5px;font-size:10px;line-height:14px;color:#111;letter-spacing:0.300px;right:943.14px;">Serviço</span>
<div style="left:330px;top:270px;width:114px;height:18px;background:#f7f7f7;"></div>
<div style="left:444px;top:270px;width:1px;height:18px;background:#cfcfcf;"></div>
<span class="t" style="top:271.5px;font-size:10px;line-height:14px;color:#111;letter-spacing:0.316px;left:330.60px;">Descrição do serviço</span>
<div style="left:445px;top:270px;width:59px;height:18px;background:#f7f7f7;"></div>
<div style="left:504px;top:270px;width:1px;height:18px;background:#cfcfcf;"></div>
<span class="t" style="top:271.5px;font-size:10px;line-height:14px;color:#111;letter-spacing:0.775px;right:768.16px;">Itm Serv.</span>
<div style="left:505px;top:270px;width:50px;height:18px;background:#f7f7f7;"></div>
<div style="left:555px;top:270px;width:1px;height:18px;background:#cfcfcf;"></div>
<span class="t" style="top:271.5px;font-size:10px;line-height:14px;color:#111;letter-spacing:-0.067px;right:718.05px;">Técnico</span>
<div style="left:556px;top:270px;width:112px;height:18px;background:#f7f7f7;"></div>
<div style="left:668px;top:270px;width:1px;height:18px;background:#cfcfcf;"></div>
<span class="t" style="top:271.5px;font-size:10px;line-height:14px;color:#111;letter-spacing:0.305px;left:556.40px;">Descrição do técnico</span>
<div style="left:669px;top:270px;width:70px;height:18px;background:#f7f7f7;"></div>
<div style="left:739px;top:270px;width:1px;height:18px;background:#cfcfcf;"></div>
<span class="t" style="top:271.5px;font-size:10px;line-height:14px;color:#111;letter-spacing:0.767px;left:669.60px;">Data</span>
<div style="left:740px;top:270px;width:65px;height:18px;background:#f7f7f7;"></div>
<div style="left:805px;top:270px;width:1px;height:18px;background:#cfcfcf;"></div>
<span class="t" style="top:271.5px;font-size:10px;line-height:14px;color:#111;letter-spacing:0.236px;left:740.90px;">Hora inicial</span>
<div style="left:806px;top:270px;width:60px;height:18px;background:#f7f7f7;"></div>
<div style="left:866px;top:270px;width:1px;height:18px;background:#cfcfcf;"></div>
<span class="t" style="top:271.5px;font-size:10px;line-height:14px;color:#111;letter-spacing:0.522px;left:806.40px;">Hora final</span>
<div style="left:867px;top:270px;width:71px;height:18px;background:#f7f7f7;"></div>
<div style="left:938px;top:270px;width:1px;height:18px;background:#cfcfcf;"></div>
<span class="t" style="top:271.5px;font-size:10px;line-height:14px;color:#111;letter-spacing:0.590px;left:868.70px;">Tempo total</span>
<div style="left:939px;top:270px;width:72px;height:18px;background:#f7f7f7;"></div>
<div style="left:1011px;top:270px;width:1px;height:18px;background:#cfcfcf;"></div>
<span class="t" style="top:271.5px;font-size:10px;line-height:14px;color:#111;letter-spacing:0.400px;left:940.50px;">Observação</span>
<div style="left:203px;top:288px;width:28px;height:18px;background:#404040;"></div>
<div style="left:231px;top:288px;width:1px;height:19px;background:#f4f4f4;"></div>
<div style="left:232px;top:288px;width:47px;height:18px;background:#808080;"></div>
<div style="left:279px;top:288px;width:1px;height:19px;background:#f4f4f4;"></div>
<div style="left:280px;top:288px;width:49px;height:18px;background:#808080;"></div>
<div style="left:329px;top:288px;width:1px;height:19px;background:#f4f4f4;"></div>
<div style="left:330px;top:288px;width:114px;height:18px;background:#808080;"></div>
<div style="left:444px;top:288px;width:1px;height:19px;background:#f4f4f4;"></div>
<div style="left:445px;top:288px;width:59px;height:18px;background:#808080;"></div>
<div style="left:504px;top:288px;width:1px;height:19px;background:#f4f4f4;"></div>
<div style="left:505px;top:288px;width:50px;height:18px;background:#808080;"></div>
<div style="left:555px;top:288px;width:1px;height:19px;background:#f4f4f4;"></div>
<div style="left:556px;top:288px;width:112px;height:18px;background:#808080;"></div>
<div style="left:668px;top:288px;width:1px;height:19px;background:#f4f4f4;"></div>
<div style="left:669px;top:288px;width:70px;height:18px;background:#808080;"></div>
<div style="left:739px;top:288px;width:1px;height:19px;background:#f4f4f4;"></div>
<div style="left:740px;top:288px;width:65px;height:18px;background:#808080;"></div>
<div style="left:805px;top:288px;width:1px;height:19px;background:#f4f4f4;"></div>
<div style="left:806px;top:288px;width:60px;height:18px;background:#808080;"></div>
<div style="left:866px;top:288px;width:1px;height:19px;background:#f4f4f4;"></div>
<div style="left:867px;top:288px;width:71px;height:18px;background:#808080;"></div>
<div style="left:938px;top:288px;width:1px;height:19px;background:#f4f4f4;"></div>
<div style="left:939px;top:288px;width:72px;height:18px;background:#808080;"></div>
<div style="left:1011px;top:288px;width:1px;height:19px;background:#f4f4f4;"></div>
<div style="left:203px;top:306px;width:809px;height:1px;background:#f4f4f4;"></div>
<span class="t" style="top:289.5px;font-size:11px;line-height:15px;color:#fff;right:1041.28px;">1</span>
<span class="t" style="top:289.5px;font-size:11px;line-height:15px;color:#ececec;right:993.48px;">1</span>
<span class="t" style="top:289.5px;font-size:11px;line-height:15px;color:#ececec;right:943.55px;">19</span>
<span class="t" style="top:290.5px;font-size:10px;line-height:14px;color:#ececec;letter-spacing:-0.180px;left:332.70px;">SERVICO PRESTADO</span>
<span class="t" style="top:289.5px;font-size:11px;line-height:15px;color:#ececec;right:769.48px;">1</span>
<span class="t" style="top:289.5px;font-size:11px;line-height:15px;color:#ececec;right:717.88px;">1</span>
<span class="t" style="top:290.5px;font-size:10px;line-height:14px;color:#ececec;letter-spacing:0.067px;left:557.40px;">RECH</span>
<span class="t" style="top:289.5px;font-size:11px;line-height:15px;color:#ececec;letter-spacing:0.089px;left:671.90px;">04/01/2023</span>
<span class="t" style="top:289.5px;font-size:11px;line-height:15px;color:#ececec;letter-spacing:0.071px;left:742.90px;">08:00:00</span>
<span class="t" style="top:289.5px;font-size:11px;line-height:15px;color:#ececec;letter-spacing:0.357px;left:809.00px;">11:00:00</span>
<span class="t" style="top:289.5px;font-size:11px;line-height:15px;color:#ececec;letter-spacing:0.071px;left:869.80px;">03:00:00</span>
<div style="left:231px;top:307px;width:1px;height:19px;background:#eaeaea;"></div>
<div style="left:279px;top:307px;width:1px;height:19px;background:#eaeaea;"></div>
<div style="left:329px;top:307px;width:1px;height:19px;background:#eaeaea;"></div>
<div style="left:444px;top:307px;width:1px;height:19px;background:#eaeaea;"></div>
<div style="left:504px;top:307px;width:1px;height:19px;background:#eaeaea;"></div>
<div style="left:555px;top:307px;width:1px;height:19px;background:#eaeaea;"></div>
<div style="left:668px;top:307px;width:1px;height:19px;background:#eaeaea;"></div>
<div style="left:739px;top:307px;width:1px;height:19px;background:#eaeaea;"></div>
<div style="left:805px;top:307px;width:1px;height:19px;background:#eaeaea;"></div>
<div style="left:866px;top:307px;width:1px;height:19px;background:#eaeaea;"></div>
<div style="left:938px;top:307px;width:1px;height:19px;background:#eaeaea;"></div>
<div style="left:1011px;top:307px;width:1px;height:19px;background:#eaeaea;"></div>
<div style="left:203px;top:325px;width:809px;height:1px;background:#e6e6e6;"></div>
<span class="t" style="top:308.5px;font-size:11px;line-height:15px;color:#1a1a1a;right:1041.28px;">1</span>
<span class="t" style="top:308.5px;font-size:11px;line-height:15px;color:#1a1a1a;right:993.48px;">1</span>
<span class="t" style="top:308.5px;font-size:11px;line-height:15px;color:#1a1a1a;right:943.55px;">19</span>
<span class="t" style="top:309.5px;font-size:10px;line-height:14px;color:#1a1a1a;letter-spacing:-0.180px;left:332.70px;">SERVICO PRESTADO</span>
<span class="t" style="top:308.5px;font-size:11px;line-height:15px;color:#1a1a1a;right:769.48px;">2</span>
<span class="t" style="top:308.5px;font-size:11px;line-height:15px;color:#1a1a1a;right:717.88px;">2</span>
<span class="t" style="top:309.5px;font-size:10px;line-height:14px;color:#1a1a1a;letter-spacing:-0.050px;left:557.40px;">PEDRO</span>
<span class="t" style="top:308.5px;font-size:11px;line-height:15px;color:#1a1a1a;letter-spacing:0.089px;left:671.90px;">04/01/2023</span>
<span class="t" style="top:308.5px;font-size:11px;line-height:15px;color:#1a1a1a;letter-spacing:0.214px;left:741.90px;">10:00:00</span>
<span class="t" style="top:308.5px;font-size:11px;line-height:15px;color:#1a1a1a;letter-spacing:0.357px;left:809.00px;">11:30:00</span>
<span class="t" style="top:308.5px;font-size:11px;line-height:15px;color:#1a1a1a;letter-spacing:0.071px;left:869.80px;">01:30:00</span>
<div style="left:203px;top:326px;width:28px;height:18px;background:#f0f0f0;"></div>
<div style="left:231px;top:326px;width:1px;height:19px;background:#e0e0e0;"></div>
<div style="left:232px;top:326px;width:47px;height:18px;background:#f0f0f0;"></div>
<div style="left:279px;top:326px;width:1px;height:19px;background:#e0e0e0;"></div>
<div style="left:280px;top:326px;width:49px;height:18px;background:#f0f0f0;"></div>
<div style="left:329px;top:326px;width:1px;height:19px;background:#e0e0e0;"></div>
<div style="left:330px;top:326px;width:114px;height:18px;background:#f0f0f0;"></div>
<div style="left:444px;top:326px;width:1px;height:19px;background:#e0e0e0;"></div>
<div style="left:445px;top:326px;width:59px;height:18px;background:#f0f0f0;"></div>
<div style="left:504px;top:326px;width:1px;height:19px;background:#e0e0e0;"></div>
<div style="left:505px;top:326px;width:50px;height:18px;background:#f0f0f0;"></div>
<div style="left:555px;top:326px;width:1px;height:19px;background:#e0e0e0;"></div>
<div style="left:556px;top:326px;width:112px;height:18px;background:#f0f0f0;"></div>
<div style="left:668px;top:326px;width:1px;height:19px;background:#e0e0e0;"></div>
<div style="left:669px;top:326px;width:70px;height:18px;background:#f0f0f0;"></div>
<div style="left:739px;top:326px;width:1px;height:19px;background:#e0e0e0;"></div>
<div style="left:740px;top:326px;width:65px;height:18px;background:#f0f0f0;"></div>
<div style="left:805px;top:326px;width:1px;height:19px;background:#e0e0e0;"></div>
<div style="left:806px;top:326px;width:60px;height:18px;background:#f0f0f0;"></div>
<div style="left:866px;top:326px;width:1px;height:19px;background:#e0e0e0;"></div>
<div style="left:867px;top:326px;width:71px;height:18px;background:#f0f0f0;"></div>
<div style="left:938px;top:326px;width:1px;height:19px;background:#e0e0e0;"></div>
<div style="left:939px;top:326px;width:72px;height:18px;background:#f0f0f0;"></div>
<div style="left:1011px;top:326px;width:1px;height:19px;background:#e0e0e0;"></div>
<div style="left:203px;top:344px;width:809px;height:1px;background:#e6e6e6;"></div>
<span class="t" style="top:327.5px;font-size:11px;line-height:15px;color:#1a1a1a;right:1041.28px;">1</span>
<span class="t" style="top:327.5px;font-size:11px;line-height:15px;color:#1a1a1a;right:993.48px;">1</span>
<span class="t" style="top:327.5px;font-size:11px;line-height:15px;color:#1a1a1a;right:943.55px;">19</span>
<span class="t" style="top:328.5px;font-size:10px;line-height:14px;color:#1a1a1a;letter-spacing:-0.180px;left:332.70px;">SERVICO PRESTADO</span>
<span class="t" style="top:327.5px;font-size:11px;line-height:15px;color:#1a1a1a;right:769.48px;">3</span>
<span class="t" style="top:327.5px;font-size:11px;line-height:15px;color:#1a1a1a;right:717.88px;">1</span>
<span class="t" style="top:328.5px;font-size:10px;line-height:14px;color:#1a1a1a;letter-spacing:0.067px;left:557.40px;">RECH</span>
<span class="t" style="top:327.5px;font-size:11px;line-height:15px;color:#1a1a1a;letter-spacing:0.089px;left:671.90px;">04/01/2023</span>
<span class="t" style="top:327.5px;font-size:11px;line-height:15px;color:#1a1a1a;letter-spacing:0.214px;left:741.90px;">13:00:00</span>
<span class="t" style="top:327.5px;font-size:11px;line-height:15px;color:#1a1a1a;letter-spacing:0.214px;left:809.00px;">18:00:00</span>
<span class="t" style="top:327.5px;font-size:11px;line-height:15px;color:#1a1a1a;letter-spacing:0.071px;left:869.80px;">05:00:00</span>
<svg style="left:202px;top:458px" width="302" height="27" viewBox="0 0 302 27"><path d="M0.5 0 V22 C0.5 24 1.5 25.5 3.5 25.5 H281 C283.5 25.5 285 24.5 286 22.5 L299.5 1" fill="none" stroke="#c9c9c9" stroke-width="1"/></svg>
<svg style="left:207px;top:464px" width="16" height="14" viewBox="0 0 16 14" fill="none" stroke="#2f6bd0" stroke-width="1.2" stroke-linecap="round" stroke-linejoin="round"><path d="M0.8 0.8 H15.2 L9.6 7.2 V11 L6.4 13.2 V7.2 Z"/></svg>
<div style="left:230px;top:462px;width:231px;height:19px;background:#fff;border:1px solid #cbcbcb;border-radius:2px;"></div>
<span class="t" style="top:463.5px;font-size:11px;line-height:15px;color:#787878;font-style:italic;letter-spacing:-0.087px;left:234.60px;">Digite aqui para buscar…</span>
<svg style="left:470.7px;top:466.7px" width="8.4" height="8.4" viewBox="0 0 8.4 8.4"><path d="M0.3 0.3 L8.1 8.1 M8.1 0.3 L0.3 8.1" stroke="#8a8a8a" stroke-width="1.1" fill="none"/></svg>
<div class="btn" style="left:202px;top:489px;width:100px;height:22px"></div>
<svg style="left:215.2px;top:491.5px" width="12" height="16" viewBox="0 0 12 16" fill="none" stroke="#2f6bd0" stroke-width="1.15" stroke-linecap="round" stroke-linejoin="round"><path d="M1.6 0.7 H7.4 L11.3 4.6 V14.4 C11.3 15 11 15.3 10.4 15.3 H1.6 C1 15.3 0.7 15 0.7 14.4 V1.6 C0.7 1 1 0.7 1.6 0.7 Z M7.2 0.9 V4.8 H11.1"/><rect x="2.8" y="7.6" width="6.4" height="5.6" rx="0.6"/><path d="M2.8 9.5 H9.2 M2.8 11.4 H9.2 M5 9.5 V13.2"/></svg>
<span class="t" style="top:492.5px;font-size:11px;line-height:15px;color:#1a1a1a;letter-spacing:-0.350px;left:231.50px;"><u>C</u>onsulta OS</span>
<div class="btn" style="left:303px;top:489px;width:100px;height:22px"></div>
<svg style="left:310px;top:491.7px" width="16" height="16" viewBox="0 0 16 16" fill="none" stroke="#2f6bd0" stroke-width="1.15" stroke-linecap="round" stroke-linejoin="round"><circle cx="6.6" cy="6.6" r="5.9"/><path d="M10.9 10.9 L15.3 15.3"/></svg>
<span class="t" style="top:492.5px;font-size:11px;line-height:15px;color:#1a1a1a;letter-spacing:-0.250px;left:329.00px;">Co<u>n</u>sulta Serv</span>
<div class="btn" style="left:404px;top:489px;width:100px;height:22px"></div>
<svg style="left:414.7px;top:491.5px" width="12" height="16" viewBox="0 0 12 16" fill="none" stroke="#2f6bd0" stroke-width="1.15" stroke-linecap="round" stroke-linejoin="round"><path d="M1.6 0.7 H7.4 L11.3 4.6 V14.4 C11.3 15 11 15.3 10.4 15.3 H1.6 C1 15.3 0.7 15 0.7 14.4 V1.6 C0.7 1 1 0.7 1.6 0.7 Z M7.2 0.9 V4.8 H11.1"/></svg>
<span class="t" style="top:492.5px;font-size:11px;line-height:15px;color:#1a1a1a;letter-spacing:-0.300px;left:431.90px;"><u>O</u>bservações</span>
<div class="btn" style="left:505px;top:489px;width:100px;height:22px"></div>
<svg style="left:512px;top:492px" width="12" height="16" viewBox="0 0 12 16" fill="none" stroke="#2f6bd0" stroke-width="1.15" stroke-linecap="round" stroke-linejoin="round"><path d="M1.6 0.7 H7.4 L11.3 4.6 V14.4 C11.3 15 11 15.3 10.4 15.3 H1.6 C1 15.3 0.7 15 0.7 14.4 V1.6 C0.7 1 1 0.7 1.6 0.7 Z M7.2 0.9 V4.8 H11.1 M3.2 8 H8.8 M3.2 10.3 H8.8 M3.2 12.6 H8.8"/></svg>
<span class="t" style="top:492.5px;font-size:11px;line-height:15px;color:#1a1a1a;letter-spacing:-0.021px;left:527.50px;">Relat./Gráficos</span>
<div class="btn" style="left:860px;top:489px;width:87px;height:22px"></div>
<svg style="left:868.7px;top:492.3px" width="15" height="15" viewBox="0 0 15 15" fill="none" stroke="#2f6bd0" stroke-width="1.15" stroke-linecap="round" stroke-linejoin="round"><path d="M2.5 0.6 V2.8 M2.5 6.4 V14.4 M7.5 0.6 V8.2 M7.5 11.8 V14.4 M12.5 0.6 V3.6 M12.5 7.2 V14.4"/><circle cx="2.5" cy="4.6" r="1.8"/><circle cx="7.5" cy="10" r="1.8"/><circle cx="12.5" cy="5.4" r="1.8"/></svg>
<span class="t" style="top:492.5px;font-size:11px;line-height:15px;color:#1a1a1a;letter-spacing:-0.200px;left:886.80px;">Configurar</span>
<div class="btn" style="left:948px;top:489px;width:12px;height:22px"></div>
<svg style="left:952.0px;top:499.5px" width="4" height="3" viewBox="0 0 4 3"><path d="M0.3 0.5 L2 2 L3.7 0.5" fill="none" stroke="#a4b8de" stroke-width="0.9"/></svg>
<div class="btn" style="left:961px;top:489px;width:87px;height:22px"></div>
<svg style="left:966.8px;top:493px" width="15" height="14" viewBox="0 0 15 14" fill="none" stroke="#2f6bd0" stroke-width="1.15" stroke-linecap="round" stroke-linejoin="round"><path d="M1 6 C1.6 3 4 1 7.2 1 C9.6 1 11.6 2.2 12.8 4 M13.4 0.8 V4.4 H9.8 M14 8 C13.4 11 11 13 7.8 13 C5.4 13 3.4 11.8 2.2 10 M1.6 13.2 V9.6 H5.2"/></svg>
<span class="t" style="top:492.5px;font-size:11px;line-height:15px;color:#1a1a1a;letter-spacing:-0.127px;left:983.40px;">F5-Atuali<u>z</u>ar</span>
<div class="btn" style="left:1049px;top:489px;width:12px;height:22px"></div>
<svg style="left:1053.0px;top:499.5px" width="4" height="3" viewBox="0 0 4 3"><path d="M0.3 0.5 L2 2 L3.7 0.5" fill="none" stroke="#a4b8de" stroke-width="0.9"/></svg>
<div class="btn" style="left:961px;top:512px;width:87px;height:22px"></div>
<svg style="left:978.2px;top:516.2px" width="16" height="14" viewBox="0 0 16 14" fill="none" stroke="#2f6bd0" stroke-width="1.15" stroke-linecap="round" stroke-linejoin="round"><rect x="0.7" y="0.7" width="14.6" height="12.6" rx="1.6"/><path d="M0.7 4.4 H15.3 M5.2 4.4 V13.3"/></svg>
<span class="t" style="top:515.5px;font-size:11px;line-height:15px;color:#1a1a1a;letter-spacing:0.260px;left:995.30px;">Layout</span>
<div class="btn" style="left:1049px;top:512px;width:12px;height:22px"></div>
<svg style="left:1053.0px;top:522.5px" width="4" height="3" viewBox="0 0 4 3"><path d="M0.3 0.5 L2 2 L3.7 0.5" fill="none" stroke="#a4b8de" stroke-width="0.9"/></svg>
<div class="btn" style="left:961px;top:535px;width:100px;height:44px"></div>
<svg style="left:993px;top:550.2px" width="17" height="14" viewBox="0 0 17 14" fill="none" stroke="#2f6bd0" stroke-width="1.15" stroke-linecap="round" stroke-linejoin="round"><path d="M4.6 0.7 H2.4 C1.3 0.7 0.7 1.3 0.7 2.4 V11.6 C0.7 12.7 1.3 13.3 2.4 13.3 H4.6"/><path d="M5.6 5 H10 V2.4 L15.8 7 L10 11.6 V9 H5.6 Z"/></svg>
<span class="t" style="top:550.0px;font-size:11px;line-height:15px;color:#1a1a1a;left:1011.70px;display:inline-block;transform:scaleX(0.8650);transform-origin:0 50%;"><u>S</u>air</span>
<div style="left:1068px;top:576px;width:2px;height:2px;background:#c2c2c2;"></div>
<div style="left:1065px;top:579px;width:2px;height:2px;background:#c2c2c2;"></div>
<div style="left:1068px;top:579px;width:2px;height:2px;background:#c2c2c2;"></div>
<div style="left:1062px;top:582px;width:2px;height:2px;background:#c2c2c2;"></div>
<div style="left:1065px;top:582px;width:2px;height:2px;background:#c2c2c2;"></div>
<div style="left:1068px;top:582px;width:2px;height:2px;background:#c2c2c2;"></div>
</body>
</html>
